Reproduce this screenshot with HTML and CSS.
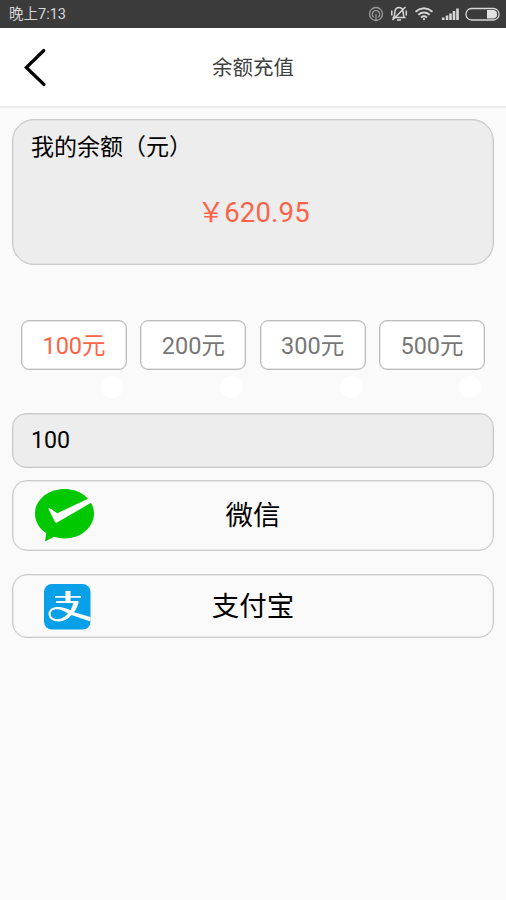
FILE: index.html
```html
<!DOCTYPE html>
<html lang="zh-CN">
<head>
<meta charset="utf-8">
<title>余额充值</title>
<link rel="stylesheet" href="styles.css">
</head>
<body>
<div class="status">
  <span class="time">晚上7:13</span>
  <svg class="status-icons" width="136" height="28" viewBox="366 0 136 28" fill="none" stroke="#d8d8d8">
    <g stroke="#9a9a9a" stroke-width="1.3">
      <circle cx="376" cy="14" r="6.5"/>
      <path d="M373.8 17.2a3.7 3.7 0 1 1 4.4 0M376 14v6"/>
    </g>
    <g stroke-width="1.5">
      <path d="M393.500 17.500c1.500-1.500 1-4 1.500-6.500.5-2 2-3.500 4-3.500s3.500 1.500 4 3.500c.5 2.500 0 5 1.500 6.500zM397 20h4M405.500 7l-13 13M391.800 10.500v5M406.300 10.500v5"/>
    </g>
    <g stroke-width="1.9">
      <path d="M415.500 11.700q8.500-6.800 17 0M418.300 14.700q5.700-4.500 11.400 0M421 17.500q3-2.300 6 0"/>
      <circle cx="424" cy="19.200" r="1.100" fill="#d8d8d8" stroke="none"/>
    </g>
    <path stroke-width="2.600" d="M443.200 20v-2.500M447 20v-4.500M450.500 20v-6.500M454 20v-9M457.500 20V8.500"/>
    <rect x="466" y="8.500" width="33" height="11.500" rx="5.500" stroke-width="1.300"/>
    <path fill="#e2e2e2" stroke="none" d="M487 10h6a4 4 0 0 1 4 4v.5a4 4 0 0 1-4 4h-6z"/>
  </svg>
</div>
<header class="header">
  <svg class="back" width="24" height="40" viewBox="0 0 24 40" fill="none" stroke="#000" stroke-width="3.200" stroke-linecap="round"><path d="M20.800 3.500 3.300 20.500 21 37.500"/></svg>
  <h1 class="title">余额充值</h1>
</header>
<main class="content">
  <section class="balance">
    <div class="label">我的余额（元）</div>
    <div class="amount"><span class="yen">￥</span>620.95</div>
  </section>
  <div class="options">
    <div class="option"><button class="chip selected">100元</button><i class="dot"></i></div>
    <div class="option"><button class="chip">200元</button><i class="dot"></i></div>
    <div class="option"><button class="chip">300元</button><i class="dot"></i></div>
    <div class="option"><button class="chip">500元</button><i class="dot"></i></div>
  </div>
  <div class="field">100</div>
  <button class="pay wechat">
    <svg class="logo" width="60" height="54" viewBox="0 0 60 54"><path fill="#00c800" d="M29.500 1C46 1 59 12 59 25.500S46 50.500 29.500 50.500q-5.500 0-10.500-1.700L10 53.500l1.200-8.500C4 40.500 0 33.500 0 25.500 0 12 13 1 29.500 1z"/><path fill="#fff" d="M13.300 20.500q.8-1 2 0l7 4.700L53 10.800l4 3.500-35 20.200q-1.200.6-2-.6z"/></svg>
    <span class="name">微信</span>
  </button>
  <button class="pay alipay">
    <svg class="logo" width="47" height="46" viewBox="0 0 47 46"><rect width="46.500" height="45.500" rx="8" fill="#07a0e9"/><path fill="#fff" d="M21.500 7h5v5H37v1.800H26.500V17h8v2c-1 3.500-2.500 6.500-4.500 9.200L46.500 33v4.500L27.500 31c-4 4.500-8 6.500-12.500 6.500-6.500 0-10.500-3-10.500-7.500s4-7 9.500-7c4.500 0 8.500 1.500 12.500 3.300 1.200-2.300 2-4.500 2.800-7.300H12v-2h9.500v-3.200H11V12h10.500zM24 29.500c-4-2.500-7.500-4.300-11-4.300-4 0-6.300 1.800-6.300 4.800 0 3.200 2.800 5 7 5 4 0 7.300-2 10.300-5.500z"/></svg>
    <span class="name">支付宝</span>
  </button>
</main>
</body>
</html>
```
FILE: styles.css
```css
* { box-sizing: border-box; }
body {
  margin: 0;
  min-height: 900px;
  background: #fafafa;
  color: #000;
  font-family: Roboto, "Noto Sans CJK SC", sans-serif;
}
button { font-family: inherit; padding: 0; margin: 0; }
.status {
  height: 28px;
  background: #3b3b3b;
  display: flex;
  align-items: center;
  justify-content: space-between;
  padding: 0 4px 0 9px;
}
.time { color: #d6d6d6; font-size: 14.5px; line-height: 26px; padding-top: 2px; }
.status-icons { display: block; }
.header {
  height: 80px;
  background: #fff;
  border-bottom: 2px solid #ebebeb;
  display: grid;
  grid-template-columns: 48px 1fr 48px;
  align-items: center;
}
.back { margin-left: 23px; }
.title {
  margin: 0;
  padding-top: 2px;
  color: #404040;
  font-size: 20.5px;
  font-weight: 400;
  line-height: 30px;
  text-align: center;
}
.content { padding: 11px 12px 0; }
.balance {
  height: 146px;
  background: #ededed;
  border: 1px solid #c8c8c8;
  box-shadow: inset 0 0 0 0.5px #d6d6d6;
  border-radius: 22px;
  padding: 11px 18px;
}
.label { font-size: 23px; line-height: 34px; }
.amount {
  margin-top: 28px;
  padding-left: 1px;
  color: #ff6347;
  font-size: 27.5px;
  line-height: 40px;
  text-align: center;
  letter-spacing: 0.2px;
}
.yen { letter-spacing: -0.5px; }
.options {
  display: flex;
  justify-content: space-between;
  margin: 55px 9px 0;
  height: 93px;
}
.option { width: 106px; }
.chip {
  display: block;
  width: 100%;
  height: 50px;
  padding-bottom: 2px;
  background: #fff;
  border: 1px solid #bcbcbc;
  box-shadow: inset 0 0 0 0.5px #d0d0d0;
  border-radius: 8px;
  color: #777;
  font-size: 23.5px;
}
.chip.selected { color: #ff6347; }
.dot {
  display: block;
  width: 22px;
  height: 22px;
  margin: 6px 4px 0 auto;
  border-radius: 50%;
  background: #fff;
}
.field {
  height: 55px;
  background: #ededed;
  border: 1px solid #c8c8c8;
  box-shadow: inset 0 0 0 0.5px #d6d6d6;
  border-radius: 14px;
  padding-left: 18px;
  font-size: 23.2px;
  line-height: 53px;
}
.pay {
  display: grid;
  grid-template-columns: 82px 1fr 82px;
  align-items: center;
  width: 100%;
  background: #fafafa;
  border: 1px solid #cacaca;
  box-shadow: inset 0 0 0 0.5px #dadada;
  border-radius: 15px;
  color: #000;
  font-size: 27.5px;
}
.wechat { height: 71px; margin-top: 12px; }
.wechat .logo { margin: 0 0 2px 22px; }
.wechat .name { padding-bottom: 6px; }
.alipay { height: 64px; margin-top: 23px; }
.alipay .logo { margin: 1px 0 0 31px; }
.alipay .name { padding-bottom: 4px; }
```
